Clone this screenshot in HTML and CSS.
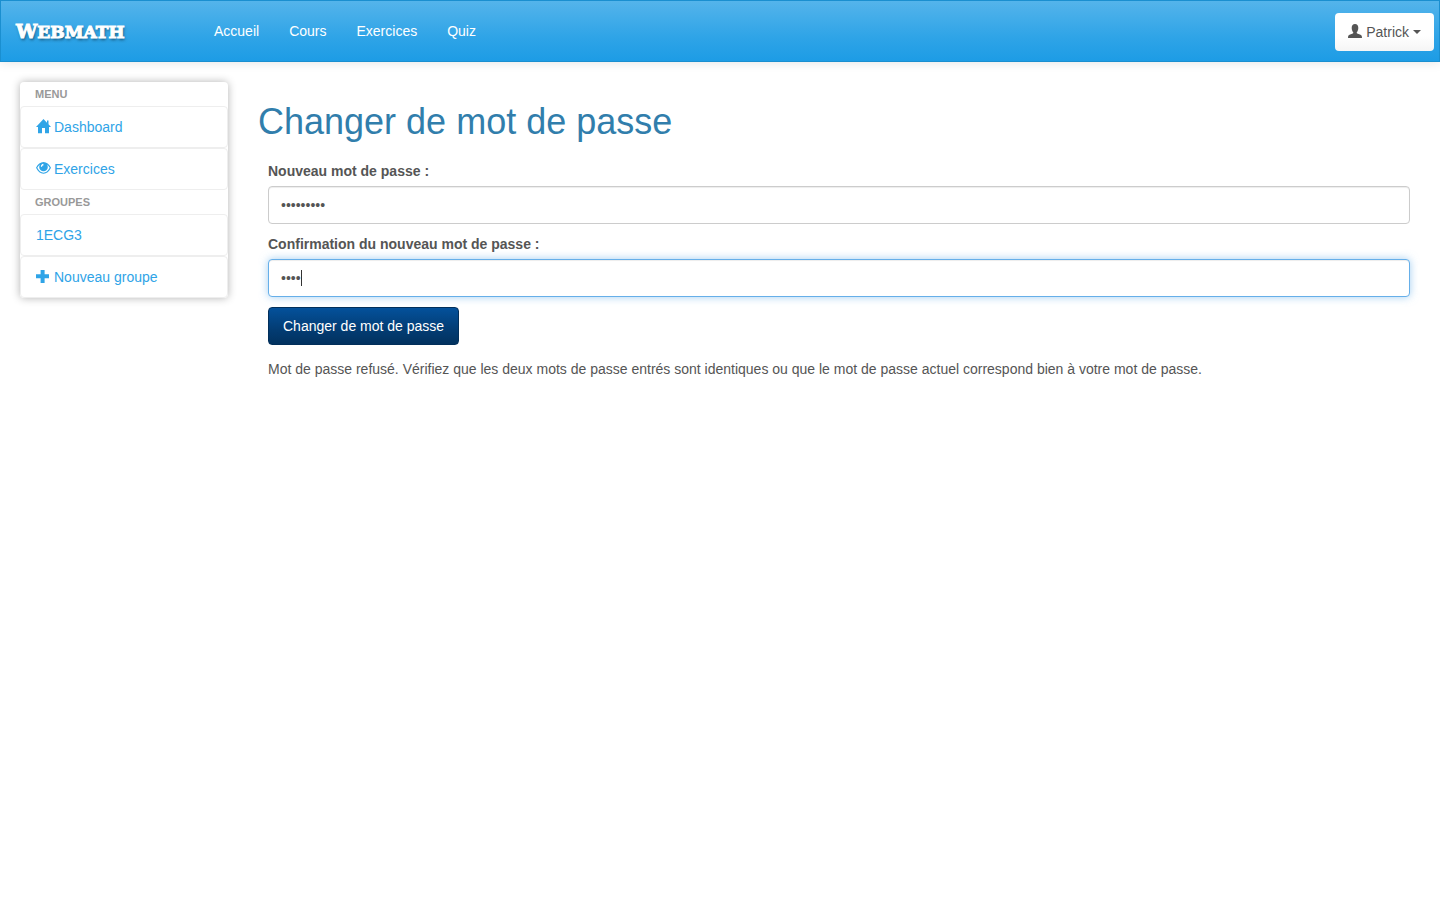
FILE: index.html
```html
<!DOCTYPE html>
<html lang="fr">
<head>
<meta charset="utf-8">
<meta name="viewport" content="width=device-width, initial-scale=1">
<title>Webmath - Changer de mot de passe</title>
<link rel="stylesheet" href="styles.css">
</head>
<body>
<header class="navbar">
  <a class="brand" href="#">Webmath</a>
  <nav class="nav">
    <a href="#">Accueil</a>
    <a href="#">Cours</a>
    <a href="#">Exercices</a>
    <a href="#">Quiz</a>
  </nav>
  <button class="user-button" type="button">
    <svg class="icon" viewBox="0 0 15 15" aria-hidden="true"><path d="M7 0C4.900 0 3.700 1.500 3.700 3.700C3.700 5.600 4.300 7.300 5.200 8.200C5.500 9 5 9.400 4.200 9.700L1.500 10.800C.4 11.300 0 12.200 0 14H14C14 12.200 13.600 11.300 12.500 10.800L9.800 9.700C9 9.400 8.500 9 8.800 8.200C9.700 7.300 10.300 5.600 10.300 3.700C10.300 1.500 9.100 0 7 0Z"/></svg>
    <span>Patrick</span>
    <span class="caret"></span>
  </button>
</header>
<div class="layout">
  <aside class="sidebar">
    <h2 class="menu-title">Menu</h2>
    <a class="menu-item" href="#"><svg class="icon" viewBox="0 0 15 15" aria-hidden="true"><path d="M7.500 0L0 8H2V14.200H6V9H9V14.200H13V8H15L12.500 5.300V1.500H11V3.700Z"/></svg><span>Dashboard</span></a>
    <a class="menu-item" href="#"><svg class="icon" viewBox="0 0 15 15" aria-hidden="true"><path fill-rule="evenodd" d="M0 6.800C1.800 3.100 4.500 1 7.500 1S13.200 3.100 15 6.800C13.200 10.700 10.500 12.800 7.500 12.800S1.800 10.700 0 6.800ZM1.300 6.800C2.900 10 5.100 11.700 7.500 11.700S12.100 10 13.700 6.800C13 5.300 12.100 4.200 11 3.400C11.500 4.100 11.800 5 11.800 5.900A4.300 4.300 0 0 1 3.200 5.900C3.200 5 3.500 4.100 4 3.400C2.900 4.200 2 5.300 1.300 6.800ZM7.200 2.700C5.900 2.900 4.900 4 4.800 5.400L6 5.900C6.100 4.800 6.700 4.300 7.600 4.200Z"/></svg><span>Exercices</span></a>
    <h2 class="menu-title">Groupes</h2>
    <a class="menu-item" href="#"><span>1ECG3</span></a>
    <a class="menu-item" href="#"><svg class="icon" viewBox="0 0 15 15" aria-hidden="true"><path d="M4.600 1H8.600V5.300H13V9.300H8.600V14H4.600V9.300H0V5.300H4.600Z"/></svg><span>Nouveau groupe</span></a>
  </aside>
  <main class="content">
    <h1>Changer de mot de passe</h1>
    <form class="form">
      <label for="password">Nouveau mot de passe :</label>
      <input id="password" type="password" value="azertyuio" autocomplete="new-password">
      <label for="confirmation">Confirmation du nouveau mot de passe :</label>
      <div class="field">
        <input id="confirmation" type="password" value="azer" autocomplete="new-password" autofocus>
        <span class="text-cursor"></span>
      </div>
      <button class="submit" type="submit">Changer de mot de passe</button>
      <p class="message">Mot de passe refusé. Vérifiez que les deux mots de passe entrés sont identiques ou que le mot de passe actuel correspond bien à votre mot de passe.</p>
    </form>
  </main>
</div>
</body>
</html>
```
FILE: styles.css
```css
* { box-sizing: border-box; }

body {
  margin: 0;
  background: #fff;
  color: #555;
  font: 14px/20px "Liberation Sans", Arial, sans-serif;
}

a { color: #2fa4e7; text-decoration: none; }

.icon { width: 15px; height: 15px; flex: none; margin-bottom: 2px; fill: currentColor; }

.navbar {
  display: flex;
  align-items: center;
  height: 62px;
  padding: 0 5px 0 15px;
  border: 1px solid #1a8fd0;
  background: linear-gradient(#54b4eb, #2fa4e7 60%, #1d9ce5);
  box-shadow: 0 1px 10px rgba(0, 0, 0, .1);
}

.brand {
  width: 198px;
  color: #fff;
  font: bold 17px/20px "DejaVu Serif", serif;
  text-transform: uppercase;
  text-shadow: 1px 2px 3px rgba(0, 0, 0, .5);
  -webkit-text-stroke: 1px #fff;
}

.brand::first-letter { font-size: 19px; }

.nav { display: flex; gap: 30px; flex: 1; }
.nav a { color: #fff; }

.user-button {
  display: flex;
  align-items: center;
  gap: 3px;
  height: 38px;
  margin-top: 2px;
  padding: 0 13px;
  border: 0;
  border-radius: 4px;
  background: linear-gradient(#fff 60%, #f5f5f5);
  color: #555;
  font: inherit;
}

.caret { margin-left: 1px; border: 4px solid transparent; border-top-color: currentColor; border-bottom: 0; }

.layout { display: flex; align-items: flex-start; gap: 30px; padding: 20px 30px 20px 20px; }

.sidebar {
  flex: none;
  width: 208px;
  border-radius: 4px;
  background: #fff;
  box-shadow: 0 0 8px rgba(0, 0, 0, .3);
}

.menu-title {
  margin: 0;
  padding: 2px 15px;
  color: #999;
  font-size: 11px;
  line-height: 20px;
  text-transform: uppercase;
}

.menu-item {
  display: flex;
  align-items: center;
  gap: 3px;
  height: 42px;
  padding: 0 15px;
  border: 1px solid #eee;
  border-radius: 4px;
  background: #fff;
}

.content { flex: 1; min-width: 0; }

h1 { margin: 20px 0 19px; color: #317eac; font-size: 36px; font-weight: 400; line-height: 40px; }

.form { display: flex; flex-direction: column; align-items: flex-start; padding-left: 10px; }

label { margin-bottom: 5px; font-weight: 700; }

input {
  display: block;
  width: 100%;
  height: 38px;
  margin-bottom: 10px;
  padding: 8px 12px;
  border: 1px solid #ccc;
  border-radius: 4px;
  outline: 0;
  background: #fff;
  box-shadow: inset 0 1px 1px rgba(0, 0, 0, .075);
  color: #555;
  font: inherit;
}

input:focus {
  border-color: #66afe9;
  box-shadow: inset 0 1px 1px rgba(0, 0, 0, .075), 0 0 8px rgba(102, 175, 233, .6);
  caret-color: transparent;
}

.field { position: relative; width: 100%; }

.text-cursor {
  position: absolute;
  top: 11px;
  left: 33px;
  width: 1px;
  height: 16px;
  background: #333;
}

.submit {
  height: 38px;
  padding: 0 14px;
  border: 1px solid #022f5a;
  border-radius: 4px;
  background: linear-gradient(#04519b, #033c73 60%, #02325f);
  color: #fff;
  font: inherit;
}

.message { margin: 14px 0; }
```
